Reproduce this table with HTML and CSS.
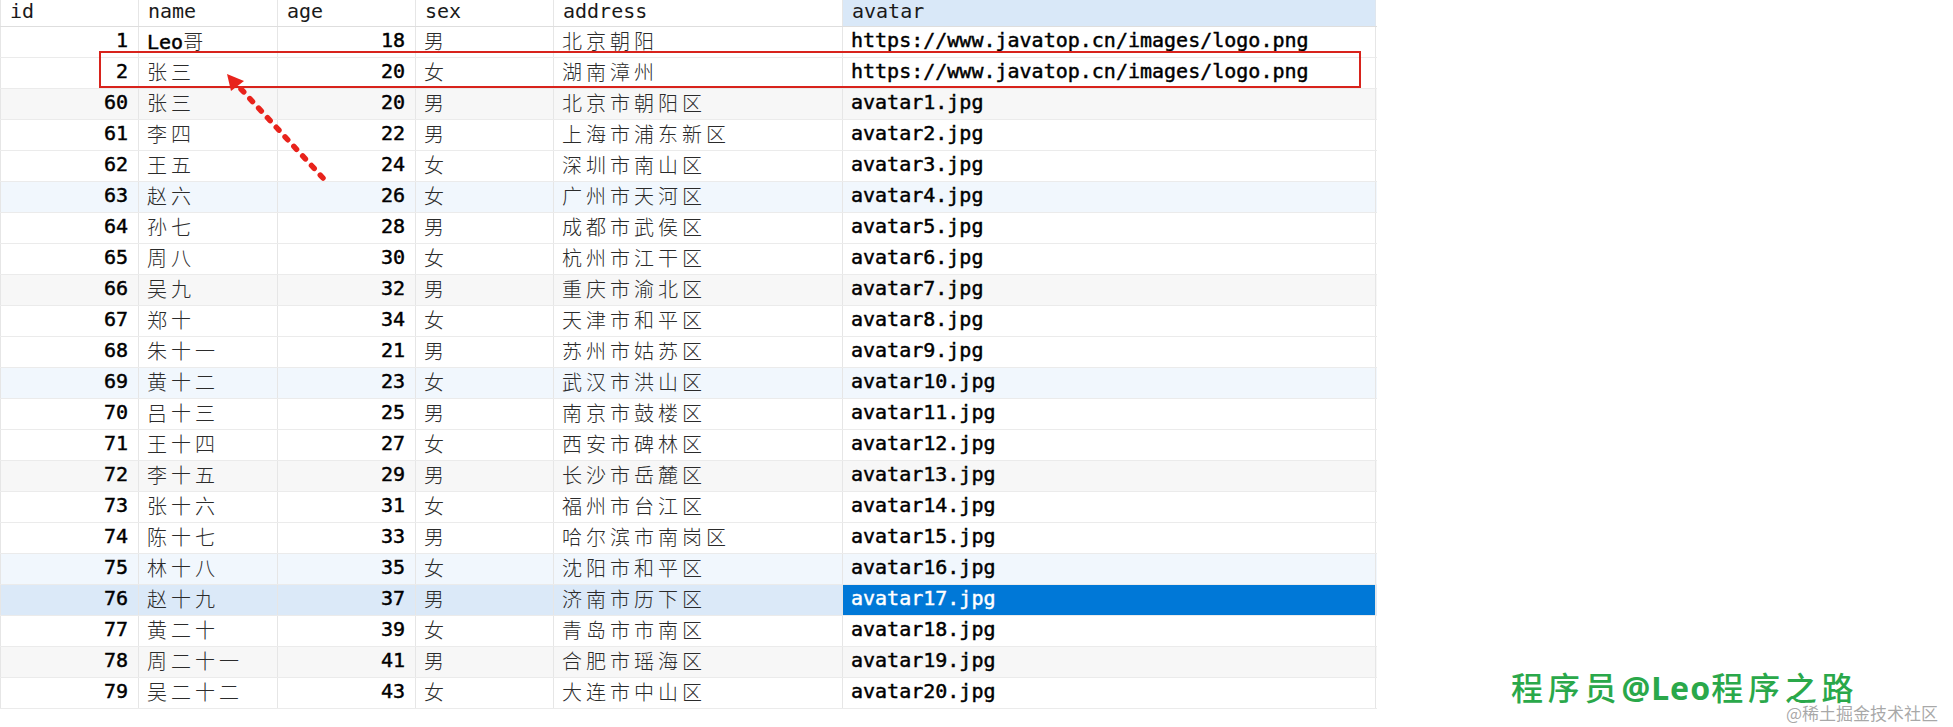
FILE: index.html
```html
<!DOCTYPE html>
<html lang="zh-CN">
<head>
<meta charset="utf-8">
<title>user table</title>
<link rel="stylesheet" href="styles.css">
</head>
<body>
<div class="page">
  <div class="grid">
    <div class="row head">
      <div class="c">id</div><div class="c">name</div><div class="c">age</div><div class="c">sex</div><div class="c">address</div><div class="c sel-col">avatar</div>
    </div>
    <div class="row"><div class="c num">1</div><div class="c zh"><span class="lat">Leo</span>哥</div><div class="c num">18</div><div class="c zh">男</div><div class="c zh">北京朝阳</div><div class="c av">https://www.javatop.cn/images/logo.png</div></div>
    <div class="row"><div class="c num">2</div><div class="c zh">张三</div><div class="c num">20</div><div class="c zh">女</div><div class="c zh">湖南漳州</div><div class="c av">https://www.javatop.cn/images/logo.png</div></div>
    <div class="row grey"><div class="c num">60</div><div class="c zh">张三</div><div class="c num">20</div><div class="c zh">男</div><div class="c zh">北京市朝阳区</div><div class="c av">avatar1.jpg</div></div>
    <div class="row"><div class="c num">61</div><div class="c zh">李四</div><div class="c num">22</div><div class="c zh">男</div><div class="c zh">上海市浦东新区</div><div class="c av">avatar2.jpg</div></div>
    <div class="row"><div class="c num">62</div><div class="c zh">王五</div><div class="c num">24</div><div class="c zh">女</div><div class="c zh">深圳市南山区</div><div class="c av">avatar3.jpg</div></div>
    <div class="row blue"><div class="c num">63</div><div class="c zh">赵六</div><div class="c num">26</div><div class="c zh">女</div><div class="c zh">广州市天河区</div><div class="c av">avatar4.jpg</div></div>
    <div class="row"><div class="c num">64</div><div class="c zh">孙七</div><div class="c num">28</div><div class="c zh">男</div><div class="c zh">成都市武侯区</div><div class="c av">avatar5.jpg</div></div>
    <div class="row"><div class="c num">65</div><div class="c zh">周八</div><div class="c num">30</div><div class="c zh">女</div><div class="c zh">杭州市江干区</div><div class="c av">avatar6.jpg</div></div>
    <div class="row grey"><div class="c num">66</div><div class="c zh">吴九</div><div class="c num">32</div><div class="c zh">男</div><div class="c zh">重庆市渝北区</div><div class="c av">avatar7.jpg</div></div>
    <div class="row"><div class="c num">67</div><div class="c zh">郑十</div><div class="c num">34</div><div class="c zh">女</div><div class="c zh">天津市和平区</div><div class="c av">avatar8.jpg</div></div>
    <div class="row"><div class="c num">68</div><div class="c zh">朱十一</div><div class="c num">21</div><div class="c zh">男</div><div class="c zh">苏州市姑苏区</div><div class="c av">avatar9.jpg</div></div>
    <div class="row blue"><div class="c num">69</div><div class="c zh">黄十二</div><div class="c num">23</div><div class="c zh">女</div><div class="c zh">武汉市洪山区</div><div class="c av">avatar10.jpg</div></div>
    <div class="row"><div class="c num">70</div><div class="c zh">吕十三</div><div class="c num">25</div><div class="c zh">男</div><div class="c zh">南京市鼓楼区</div><div class="c av">avatar11.jpg</div></div>
    <div class="row"><div class="c num">71</div><div class="c zh">王十四</div><div class="c num">27</div><div class="c zh">女</div><div class="c zh">西安市碑林区</div><div class="c av">avatar12.jpg</div></div>
    <div class="row grey"><div class="c num">72</div><div class="c zh">李十五</div><div class="c num">29</div><div class="c zh">男</div><div class="c zh">长沙市岳麓区</div><div class="c av">avatar13.jpg</div></div>
    <div class="row"><div class="c num">73</div><div class="c zh">张十六</div><div class="c num">31</div><div class="c zh">女</div><div class="c zh">福州市台江区</div><div class="c av">avatar14.jpg</div></div>
    <div class="row"><div class="c num">74</div><div class="c zh">陈十七</div><div class="c num">33</div><div class="c zh">男</div><div class="c zh">哈尔滨市南岗区</div><div class="c av">avatar15.jpg</div></div>
    <div class="row blue"><div class="c num">75</div><div class="c zh">林十八</div><div class="c num">35</div><div class="c zh">女</div><div class="c zh">沈阳市和平区</div><div class="c av">avatar16.jpg</div></div>
    <div class="row selected"><div class="c num">76</div><div class="c zh">赵十九</div><div class="c num">37</div><div class="c zh">男</div><div class="c zh">济南市历下区</div><div class="c av active">avatar17.jpg</div></div>
    <div class="row"><div class="c num">77</div><div class="c zh">黄二十</div><div class="c num">39</div><div class="c zh">女</div><div class="c zh">青岛市市南区</div><div class="c av">avatar18.jpg</div></div>
    <div class="row grey"><div class="c num">78</div><div class="c zh">周二十一</div><div class="c num">41</div><div class="c zh">男</div><div class="c zh">合肥市瑶海区</div><div class="c av">avatar19.jpg</div></div>
    <div class="row"><div class="c num">79</div><div class="c zh">吴二十二</div><div class="c num">43</div><div class="c zh">女</div><div class="c zh">大连市中山区</div><div class="c av">avatar20.jpg</div></div>
  </div>

  <div class="mark-box"></div>
  <svg class="mark-arrow" width="400" height="200" viewBox="0 0 400 200">
    <line x1="323" y1="178" x2="241" y2="89" stroke="#e8231c" stroke-width="5.5" stroke-linecap="round" stroke-dasharray="4 9"/>
    <polygon points="227,74 244,81 231,91" fill="#e8231c"/>
  </svg>

  <div class="wm-main">程序员<b>@Leo</b>程序之路</div>
  <div class="wm-sub">@稀土掘金技术社区</div>
</div>
</body>
</html>
```

FILE: styles.css
```css
html, body {
  margin: 0;
  padding: 0;
  background: #ffffff;
}

.page {
  position: relative;
  width: 1953px;
  height: 727px;
  overflow: hidden;
}

.grid {
  width: 1377px;
  font-family: "DejaVu Sans Mono", "Noto Sans CJK SC", monospace;
  font-size: 20px;
  color: #000;
}

.row {
  display: grid;
  grid-template-columns: 139px 139px 138px 138px 289px 533px;
  height: 31px;
  box-sizing: border-box;
  border-bottom: 1px solid #ebebeb;
  background: #ffffff;
}

.row.head {
  height: 27px;
  border-bottom: 1px solid #dedede;
}

.row.grey { background: #f7f7f7; }
.row.blue { background: #f1f7fd; }
.row.selected { background: #dbe9f8; }

.c {
  box-sizing: border-box;
  border-right: 1px solid #e6e6e6;
  padding: 0 10px 0 8px;
  line-height: 27px;
  white-space: nowrap;
  overflow: hidden;
  font-weight: normal;
  -webkit-text-stroke: 0.45px currentColor;
}

.c:first-child {
  border-left: 1px solid #e6e6e6;
}

.head .c {
  line-height: 23px;
  font-weight: normal;
  -webkit-text-stroke: 0;
  color: #1a1a1a;
  padding-left: 9px;
}

.head .c.sel-col {
  background: #d9e8f8;
  border-right-color: #dfe6ee;
}

.num {
  text-align: right;
  padding-right: 10px;
}

.zh {
  font-family: "Noto Sans CJK SC", "DejaVu Sans Mono", sans-serif;
  font-weight: 300;
  letter-spacing: 4px;
  color: #2b2b2b;
  -webkit-text-stroke: 0;
}

.zh .lat {
  font-family: "DejaVu Sans Mono", monospace;
  font-weight: normal;
  letter-spacing: 0;
  color: #000;
  -webkit-text-stroke: 0.45px currentColor;
}

.av {
  padding-left: 8px;
}

.av.active {
  background: #0078d7;
  color: #ffffff;
}

.mark-box {
  position: absolute;
  left: 99px;
  top: 51px;
  width: 1262px;
  height: 37px;
  box-sizing: border-box;
  border: 2px solid #d8231c;
}

.mark-arrow {
  position: absolute;
  left: 0;
  top: 0;
}

.wm-main {
  position: absolute;
  left: 1511px;
  top: 670px;
  font-family: "Noto Sans CJK SC", sans-serif;
  font-size: 32px;
  font-weight: 500;
  letter-spacing: 4.8px;
  line-height: 32px;
  color: #2aa84a;
  white-space: nowrap;
}

.wm-main b {
  font-family: "Noto Sans", sans-serif;
  font-weight: bold;
  letter-spacing: 1px;
}

.wm-sub {
  position: absolute;
  left: 1786px;
  top: 704px;
  font-family: "Noto Sans CJK SC", sans-serif;
  font-size: 17px;
  line-height: 18px;
  color: rgba(140, 140, 140, 0.75);
  white-space: nowrap;
}
```
